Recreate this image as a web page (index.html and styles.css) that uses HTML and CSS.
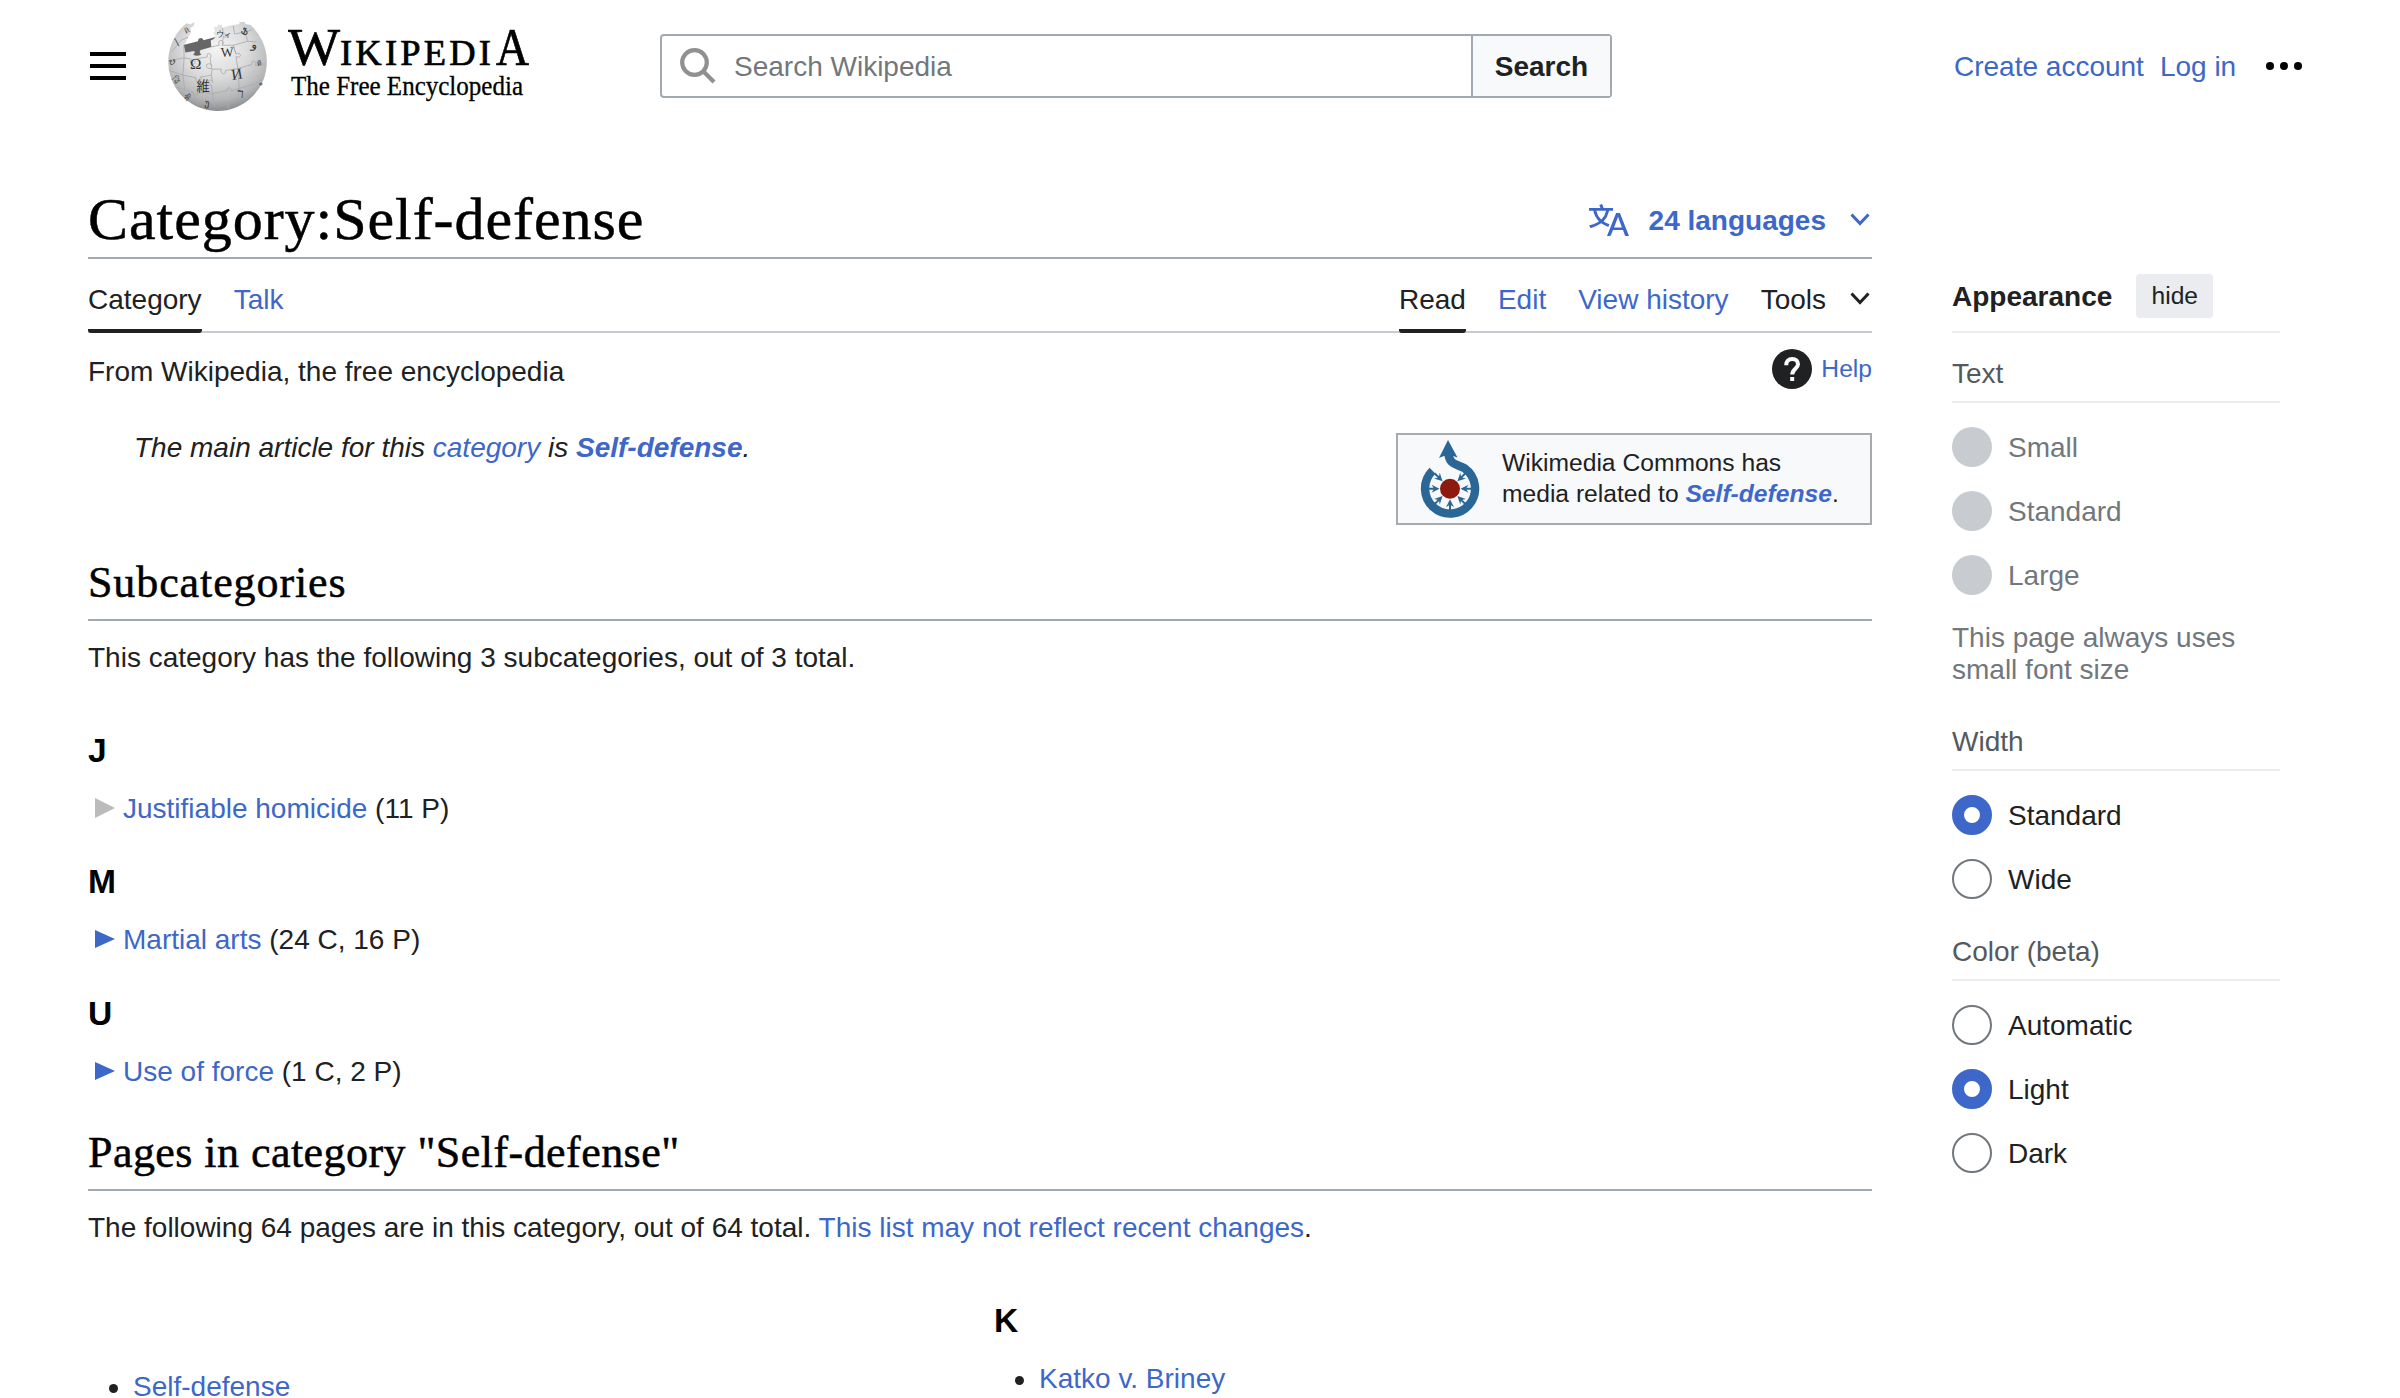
FILE: index.html
```html
<!DOCTYPE html>
<html lang="en">
<head>
<meta charset="utf-8">
<title>Category:Self-defense - Wikipedia</title>
<link rel="stylesheet" href="styles.css">
</head>
<body>
<header class="header">
  <svg class="menu" viewBox="0 0 36 28"><path d="M0 0h36v4H0zM0 12h36v4H0zM0 24h36v4H0z"/></svg>
  <a class="logo">
    <svg class="globe" viewBox="0 0 297 268">
      <defs>
        <radialGradient id="ball" cx=".48" cy=".3" r=".72"><stop offset="0" stop-color="#f4f4f4"/><stop offset=".45" stop-color="#dcdcdd"/><stop offset=".8" stop-color="#b4b5b6"/><stop offset="1" stop-color="#858687"/></radialGradient>
      </defs>
      <path fill="url(#ball)" d="M248 9A148.500 148.500 0 1 1 55 4L66 7L80 1L77 12L67 18L70 30L60 46L50 68L92 58L143 46L135 33L140 28L138 14L148 15L150 8L162 9L163 17L190 10L216 6L213 0L230 0L233 6Z"/>
      <path fill="#666" d="M47 69L90 58Q90 48 99 48Q107 50 106 55L143 45Q137 53 128 56L130 75L98 84Q91 90 100 98Q84 106 75 97Q83 92 78 87L52 92Z"/>
      <g class="seams">
        <path d="M47 69L48 108L70 112Q62 124 76 128Q84 124 80 112L118 105Q114 92 126 96Q134 104 126 108L131 140Q112 142 116 128Q128 122 132 132M130 75L154 70Q148 54 162 56Q170 62 163 70L196 70L204 96Q216 90 218 102Q212 110 204 104L210 140L172 146Q174 158 164 156Q156 150 160 142L132 142"/>
        <path d="M48 108L44 160L84 168Q80 180 92 180Q104 174 96 166L130 160L132 142M44 160L50 204L76 212Q72 224 84 224Q92 218 88 210L134 216L130 190Q118 186 122 176Q132 172 134 182L130 160M134 216L140 258M134 216L178 206Q176 196 186 198Q194 202 188 208L214 200L210 140L252 128Q250 116 260 118Q268 122 262 130L290 126"/>
        <path d="M214 200L210 232L240 226M210 232L182 240L180 262M214 200L262 186L284 170M204 96L196 70L240 58L266 60M240 58L230 30L200 36L196 12M230 30L252 24M60 46L40 54L10 90M48 108L4 116M44 160L4 146M50 204L24 196M76 212L90 250M163 17L166 36Q178 34 176 44Q168 50 166 42L163 70"/>
      </g>
      <g class="glyphs">
        <text x="66" y="143" font-size="46">Ω</text>
        <text x="158" y="104" font-size="41" transform="rotate(-3 180 90)">W</text>
        <text x="190" y="172" font-size="46" transform="rotate(-9 210 155)">И</text>
        <text x="85" y="208" font-size="40">維</text>
        <text x="208" y="228" font-size="40" transform="rotate(6 216 215)">ר</text>
        <text x="145" y="45" font-size="23">ウィ</text>
        <text x="252" y="81" font-size="36" transform="rotate(15 264 70)">و</text>
        <text x="22" y="72" font-size="27" transform="rotate(-28 30 60)">أ</text>
        <text x="9" y="130" font-size="24" transform="rotate(72 16 119)">వి</text>
        <text x="12" y="184" font-size="25" transform="rotate(50 24 175)">ৱি</text>
        <text x="110" y="254" font-size="28" transform="rotate(8 120 246)">უ</text>
        <text x="221" y="38" font-size="28" transform="rotate(25 232 25)">Ֆ</text>
        <text x="266" y="132" font-size="20">ที</text>
        <text x="46" y="32" font-size="20" transform="rotate(-30 56 20)">Й</text>
        <text x="268" y="190" font-size="22" transform="rotate(-60 277 182)">ه</text>
        <text x="48" y="236" font-size="22" transform="rotate(38 56 230)">ཝི</text>
      </g>
    </svg>
    <svg class="wordmark" viewBox="0 -14 248 90">
      <text x="0" y="36" class="big" textLength="52" lengthAdjust="spacingAndGlyphs">W</text>
      <text x="52" y="36" class="small" textLength="151" lengthAdjust="spacing">IKIPEDI</text>
      <text x="208" y="36" class="big" textLength="33" lengthAdjust="spacingAndGlyphs">A</text>
      <text x="3" y="65.500" class="tagline" textLength="232" lengthAdjust="spacingAndGlyphs">The Free Encyclopedia</text>
    </svg>
  </a>
  <form class="search">
    <div class="search-field">
      <svg viewBox="0 0 36 36"><circle cx="14.500" cy="14.500" r="12.300"/><path d="M23 23L34 34"/></svg>
      <span>Search Wikipedia</span>
    </div>
    <div class="search-button">Search</div>
  </form>
  <nav class="user-links"><a>Create account</a><a>Log in</a>
    <svg viewBox="0 0 36 8"><circle cx="4" cy="4" r="4"/><circle cx="18" cy="4" r="4"/><circle cx="32" cy="4" r="4"/></svg>
  </nav>
</header>
<div class="page">
  <main class="content">
    <div class="title-row">
      <h1>Category:Self-defense</h1>
      <div class="languages">
        <svg class="lang-icon" viewBox="0 0 20 20"><path d="M20 18h-1.440a.6.6 0 0 1-.4-.120.800.8 0 0 1-.230-.310L17 15h-5l-1 2.540a.8.8 0 0 1-.220.300.600.6 0 0 1-.400.140H9l4.550-11.470h1.890zm-3.530-4.310L14.890 9.500a11.600 11.600 0 0 1-.390-1.240q-.090.370-.190.690l-.190.560-1.580 4.190zm-6.300-1.580a13.400 13.400 0 0 1-2.910-1.410 11.460 11.460 0 0 0 2.810-5.370H12V4H7.310a4 4 0 0 0-.200-.560C6.870 2.790 6.600 2 6.600 2l-1.470.5s.4.890.6 1.500H0v1.330h2.150A11.230 11.230 0 0 0 5 10.700a17.200 17.200 0 0 1-5 2.100q.560.820.870 1.380a23.300 23.300 0 0 0 5.220-2.510 15.600 15.600 0 0 0 3.560 1.770zM3.630 5.330h4.910a8.100 8.100 0 0 1-2.450 4.450 9.100 9.100 0 0 1-2.460-4.450"/></svg>
        <b>24 languages</b>
        <svg class="chevron" viewBox="0 0 20 14"><path d="M1.500 1.500L10 10.500L18.500 1.500"/></svg>
      </div>
    </div>
    <nav class="tabs">
      <a class="tab active">Category</a><a class="tab">Talk</a>
      <span class="spacer"></span>
      <a class="tab active">Read</a><a class="tab">Edit</a><a class="tab">View history</a>
      <span class="tools">Tools <svg class="chevron" viewBox="0 0 20 14"><path d="M1.500 1.500L10 10.500L18.500 1.500"/></svg></span>
    </nav>
    <div class="sub-row">
      <span>From Wikipedia, the free encyclopedia</span>
      <span class="help">
        <svg viewBox="0 0 40 40"><circle cx="20" cy="20" r="20" fill="#202122"/><path d="M14.200 16.200C14.200 12.400 16.500 10 20.200 10S26 12.300 26 15.300C26 19.800 20.200 19.800 20.200 25.600" fill="none" stroke="#fff" stroke-width="4"/><path d="M18.200 28h4v4h-4z" fill="#fff"/></svg>
        <a>Help</a>
      </span>
    </div>
    <div class="lead">
      <p class="hatnote">The main article for this <a>category</a> is <b><a>Self-defense</a></b>.</p>
      <aside class="commons">
        <svg viewBox="0 0 60 80">
          <path d="M12.500 31.800A25 25 0 1 0 44.500 29.200C37 25 29 26 28.400 14" fill="none" stroke="#2a6796" stroke-width="8.400"/>
          <path d="M28 1L37.500 18.500Q28 14.500 19 19Z" fill="#2a6796"/>
          <circle cx="30" cy="49.700" r="10" fill="#8c1a10"/>
          <g fill="#2a6796" transform="translate(0 -1.300)">
            <path id="arrow" d="M29 73V67.500L26 69.500L30 61.500L34 69.500L31 67.500V73Z"/>
            <use href="#arrow" transform="rotate(45 30 51)"/><use href="#arrow" transform="rotate(90 30 51)"/><use href="#arrow" transform="rotate(135 30 51)"/>
            <use href="#arrow" transform="rotate(-45 30 51)"/><use href="#arrow" transform="rotate(-90 30 51)"/><use href="#arrow" transform="rotate(-135 30 51)"/>
          </g>
        </svg>
        <p>Wikimedia Commons has<br>media related to <b><i><a>Self-defense</a></i></b>.</p>
      </aside>
    </div>
    <section>
      <h2 class="first">Subcategories</h2>
      <p>This category has the following 3 subcategories, out of 3 total.</p>
      <div class="groups">
        <div class="group"><h3>J</h3><div class="item"><svg class="tri empty" viewBox="0 0 20 20"><path d="M0 0L20 10L0 20z"/></svg><span><a>Justifiable homicide</a> (11 P)</span></div></div>
        <div class="group"><h3>M</h3><div class="item"><svg class="tri" viewBox="0 0 20 20"><path d="M0 1L20 10L0 19z"/></svg><span><a>Martial arts</a> (24 C, 16 P)</span></div></div>
        <div class="group"><h3>U</h3><div class="item"><svg class="tri" viewBox="0 0 20 20"><path d="M0 1L20 10L0 19z"/></svg><span><a>Use of force</a> (1 C, 2 P)</span></div></div>
      </div>
    </section>
    <section>
      <h2>Pages in category "Self-defense"</h2>
      <p>The following 64 pages are in this category, out of 64 total. <a>This list may not reflect recent changes</a>.</p>
      <div class="columns">
        <ul class="column-first"><li><a>Self-defense</a></li></ul>
        <div><h3>K</h3><ul><li><a>Katko v. Briney</a></li></ul></div>
      </div>
    </section>
  </main>
  <aside class="appearance">
    <div class="panel-head"><b>Appearance</b><span class="hide">hide</span></div>
    <h4>Text</h4>
    <div class="radios disabled">
      <label><i class="radio"></i>Small</label><label><i class="radio"></i>Standard</label><label><i class="radio"></i>Large</label>
    </div>
    <p class="note">This page always uses small font size</p>
    <h4>Width</h4>
    <div class="radios">
      <label><i class="radio on"></i>Standard</label><label><i class="radio"></i>Wide</label>
    </div>
    <h4 class="color-title">Color (beta)</h4>
    <div class="radios">
      <label><i class="radio"></i>Automatic</label><label><i class="radio on"></i>Light</label><label><i class="radio"></i>Dark</label>
    </div>
  </aside>
</div>
</body>
</html>
```
FILE: styles.css
```css
* { box-sizing: border-box; }
body { margin: 0; height: 1398px; overflow: hidden; background: #fff; color: #202122; font: 28px/40px "Liberation Sans", Arial, sans-serif; }
h1, h2, h3, h4, p, ul { margin: 0; padding: 0; font-weight: normal; }
a { color: #3d67c8; }
svg { display: block; flex: none; }

.header { display: flex; align-items: center; height: 132px; padding-left: 90px; }
.menu { width: 36px; height: 28px; }
.logo { display: flex; align-items: flex-start; margin-left: 42px; width: 360px; }
.globe { width: 99px; height: 89px; }
.wordmark { width: 248px; height: 90px; margin: -7px 0 0 21px; fill: #000; font-family: "Liberation Serif", serif; }
.seams path { fill: none; stroke: #aaabac; stroke-width: 2.5; }
.glyphs { fill: #333; font-family: "Liberation Serif", "Noto Sans CJK JP", "DejaVu Sans", serif; }
.big { font-size: 52px; }
.small { font-size: 36.5px; }
.big, .small { stroke: #000; stroke-width: .7px; }
.tagline { font-size: 27px; stroke: #000; stroke-width: .3px; }

.search { display: flex; margin-left: 132px; width: 952px; height: 64px; border: 2px solid #a2a9b1; border-radius: 4px; }
.search-field { display: flex; align-items: center; flex: 1; padding-left: 18px; color: #72777d; }
.search-field span { padding-top: 2px; }
.search-field svg { width: 36px; height: 36px; margin-right: 18px; fill: none; stroke: #909090; stroke-width: 4.2; }
.search-button { width: 139px; border-left: 2px solid #a2a9b1; background: #f8f9fa; font-weight: bold; line-height: 62px; height: 60px; text-align: center; }
.user-links { display: flex; align-items: center; margin-left: 342px; }
.user-links a { padding-top: 2px; }
.user-links a + a { margin-left: 16px; }
.user-links svg { width: 36px; height: 8px; margin-left: 30px; }

.page { display: flex; padding-left: 88px; gap: 80px; }
.content { width: 1784px; }
.title-row { display: flex; justify-content: space-between; height: 127px; padding-top: 51px; border-bottom: 2px solid #a2a9b1; }
h1, h2 { color: #000; font-family: "Liberation Serif", serif; white-space: nowrap; -webkit-text-stroke: .5px #000; }
h1 { font-size: 60px; line-height: 72px; letter-spacing: .95px; }
.languages { display: flex; align-items: center; height: 40px; margin: 17px 2px 0 0; color: #3d67c8; }
.languages b { padding-top: 2px; }
.lang-icon { width: 40px; height: 40px; margin-right: 20px; fill: #3d67c8; }
.chevron { width: 20px; height: 14px; fill: none; stroke: currentColor; stroke-width: 3; }
.languages .chevron { margin-left: 24px; }

.tabs { display: flex; height: 74px; box-shadow: inset 0 -2px #c8ccd1; }
.tab { height: 74px; padding-top: 21px; margin-right: 32px; }
.tab.active { color: #202122; border-bottom: 4px solid #202122; border-radius: 0 0 3px 3px; }
.spacer { flex: 1; margin-right: -32px; }
.tools { display: flex; align-items: center; height: 40px; margin: 21px 2px 0 0; }
.tools .chevron { margin: -2px 0 0 24px; }

.sub-row { display: flex; justify-content: space-between; height: 72px; padding-top: 19px; }
.help { display: flex; align-items: center; height: 40px; margin-top: -3px; font-size: 24.64px; }
.help svg { width: 40px; height: 40px; margin-right: 9px; }
.lead { display: flex; justify-content: space-between; align-items: flex-start; height: 120px; }
.hatnote { padding: 23px 0 0 46px; font-style: italic; }
.commons { display: flex; width: 476px; height: 92px; margin-top: 28px; border: 2px solid #aaa; background: #f8f9fa; font-size: 24.64px; line-height: 31px; }
.commons svg { width: 60px; height: 80px; margin: 4px 0 0 22px; }
.commons p { margin: 12px 0 0 22px; white-space: nowrap; }

h2 { height: 67px; padding: 1px 0 8px; border-bottom: 2px solid #a2a9b1; font-size: 44px; line-height: 56px; letter-spacing: .45px; margin-bottom: 17px; }
.first { margin-top: 29px; letter-spacing: .9px; }
.groups { margin-top: 53px; height: 393px; display: grid; grid-template-rows: 131px 132px 130px; }
h3 { color: #000; font-size: 33.6px; line-height: 40px; font-weight: bold; margin-bottom: 18px; }
.item { display: flex; align-items: center; padding-left: 7px; }
.tri { width: 20px; height: 20px; margin: -2px 8px 0 0; fill: #3d67c8; }
.empty { fill: #bbb; }
.columns { display: grid; grid-template-columns: 906px 1fr; margin-top: 53px; }
ul { padding-left: 45px; list-style: none; }
li { display: flex; align-items: center; }
li::before { content: ""; width: 9px; height: 9px; margin: 2px 15px 0 -24px; border-radius: 50%; background: #202122; }
.column-first { padding-top: 66px; }

.appearance { width: 328px; padding-top: 142px; }
.panel-head { display: flex; height: 59px; border-bottom: 2px solid #eaecf0; line-height: 44px; }
.panel-head b { padding-top: 1px; }
.hide { width: 77px; height: 44px; margin-left: 24px; border-radius: 4px; background: #eaecf0; font-size: 24.6px; text-align: center; }
h4 { height: 70px; padding-top: 21px; border-bottom: 2px solid #eaecf0; color: #54595d; font-size: 28px; }
.radios { display: flex; flex-direction: column; gap: 24px; padding-top: 24px; }
.radios label { display: flex; gap: 16px; height: 40px; line-height: 42px; }
.radio { width: 40px; height: 40px; border: 2px solid #72777d; border-radius: 50%; }
.radio.on { border: 12px solid #3d67c8; }
.disabled { color: #72777d; }
.disabled .radio { border: 0; background: #c8ccd1; }
.note { margin-top: 27px; color: #72777d; line-height: 32px; }
.note + h4 { margin-top: 15px; }
.color-title { margin-top: 12px; }
```
